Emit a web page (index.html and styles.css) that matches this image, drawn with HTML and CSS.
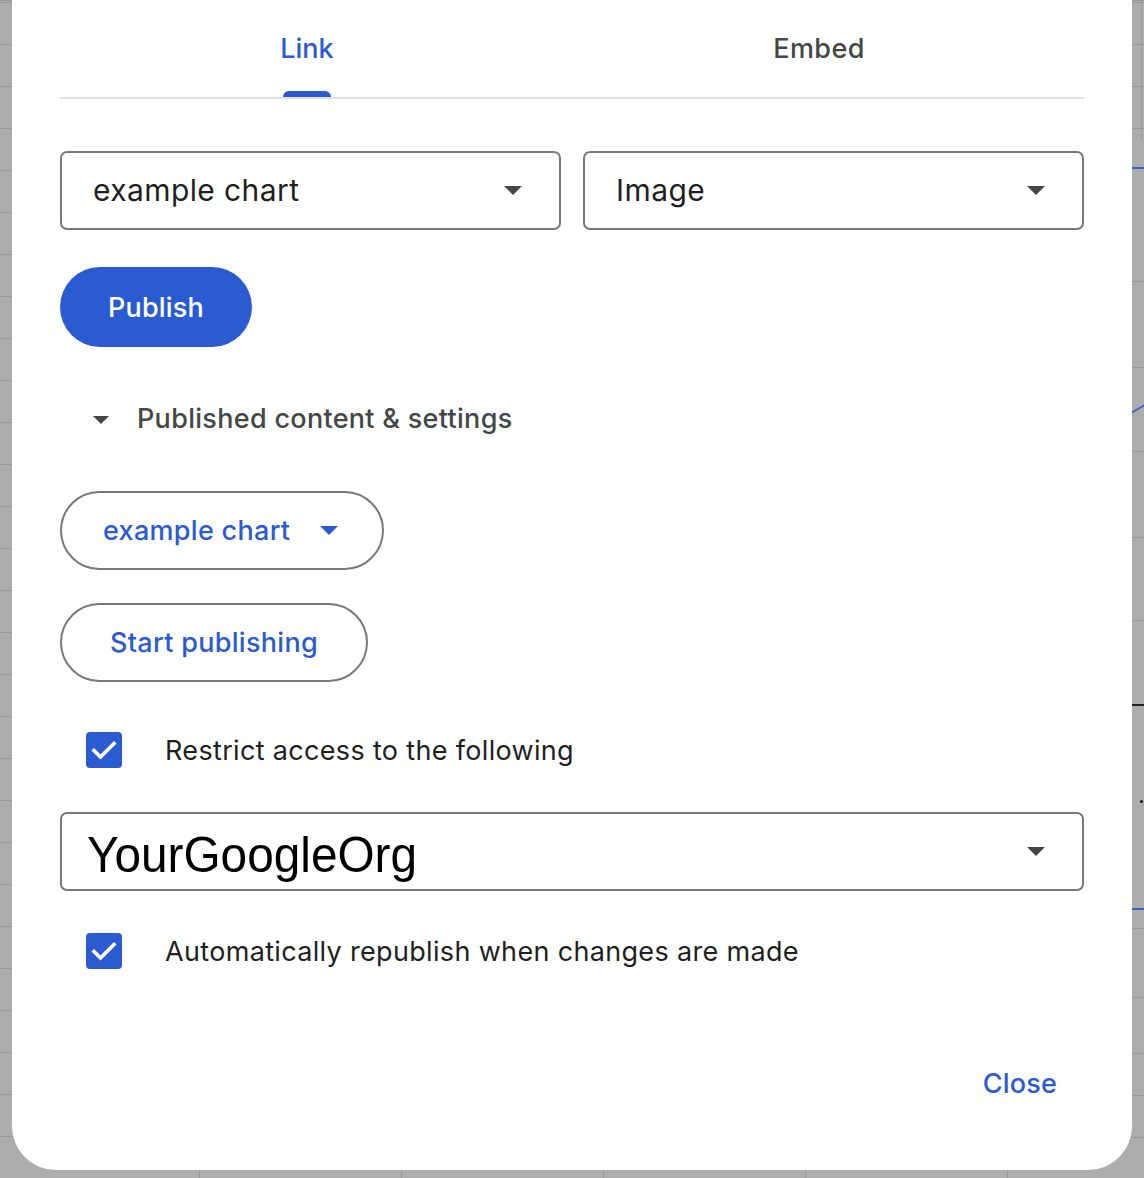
FILE: index.html
```html
<!DOCTYPE html>
<html lang="en">
<head>
<meta charset="utf-8">
<title>Publish to the web</title>
<link rel="stylesheet" href="styles.css">
</head>
<body>
<div class="page">
  <div class="strip strip-left"></div>
  <div class="dialog">
    <div class="tabs">
      <div class="tab tab-active"><span class="tab-label">Link</span><span class="tab-indicator"></span></div>
      <div class="tab"><span class="tab-label">Embed</span></div>
    </div>
    <div class="divider"></div>

    <div class="select-row">
      <div class="select"><span class="select-text">example chart</span><span class="arrow"></span></div>
      <div class="select"><span class="select-text">Image</span><span class="arrow"></span></div>
    </div>

    <button class="btn-primary">Publish</button>

    <div class="section-toggle">
      <span class="caret"></span>
      <span class="section-title">Published content &amp; settings</span>
    </div>

    <button class="btn-outline btn-chart">example chart<span class="arrow arrow-blue"></span></button>
    <button class="btn-outline btn-start">Start publishing</button>

    <div class="check-row check-row-1">
      <span class="checkbox"><svg viewBox="0 0 36 36" width="36" height="36"><polyline points="8,18.5 14.5,25 28,11.5" fill="none" stroke="#fff" stroke-width="3.6" stroke-linecap="square"/></svg></span>
      <span class="check-label">Restrict access to the following</span>
    </div>

    <div class="select select-org"><span class="org-text">YourGoogleOrg</span><span class="arrow"></span></div>

    <div class="check-row check-row-2">
      <span class="checkbox"><svg viewBox="0 0 36 36" width="36" height="36"><polyline points="8,18.5 14.5,25 28,11.5" fill="none" stroke="#fff" stroke-width="3.6" stroke-linecap="square"/></svg></span>
      <span class="check-label">Automatically republish when changes are made</span>
    </div>

    <div class="footer">
      <button class="btn-text">Close</button>
    </div>
  </div>
  <div class="strip strip-right">
    <span class="mark mark-blue" style="top:167px"></span>
    <span class="mark mark-grid" style="top:281px"></span>
    <span class="mark mark-grid" style="top:367px"></span>
    <span class="mark mark-curve"></span>
    <span class="mark mark-grid" style="top:451px"></span>
    <span class="mark mark-grid" style="top:537px"></span>
    <span class="mark mark-grid" style="top:620px"></span>
    <span class="mark mark-black" style="top:704px"></span>
    <span class="mark mark-dot"></span>
    <span class="mark mark-blue" style="top:908px"></span>
    <span class="mark mark-grid" style="top:928px"></span>
    <span class="mark mark-grid" style="top:997px"></span>
    <span class="mark mark-grid" style="top:1053px"></span>
    <span class="mark mark-grid" style="top:1095px"></span>
    <span class="mark mark-grid" style="top:1137px"></span>
  </div>
</div>
</body>
</html>
```

FILE: styles.css
```css
* { box-sizing: border-box; }

html, body {
  margin: 0;
  padding: 0;
}

body {
  width: 1144px;
  height: 1178px;
  overflow: hidden;
  font-family: Inter, Roboto, "Liberation Sans", sans-serif;
  background-color: #adadad;
  background-image:
    repeating-linear-gradient(to bottom, #999 0, #999 1px, transparent 1px, transparent 42px),
    repeating-linear-gradient(to right, #999 0, #999 1px, transparent 1px, transparent 202px);
  background-position: 0 2px, -3px 0;
}

.page {
  display: flex;
  height: 1178px;
}

.strip {
  width: 12px;
  flex: none;
}

.strip-right {
  position: relative;
  background-image: linear-gradient(to bottom, transparent 0, transparent 140px, #adadad 140px);
}

.mark {
  position: absolute;
  left: 0;
  width: 12px;
  height: 1px;
}
.mark-grid { background: #999; }
.mark-blue { height: 2px; background: #3b63c4; }
.mark-black { height: 2px; background: #222; }
.mark-curve {
  top: 408px;
  height: 2px;
  background: #3b63c4;
  transform: skewY(-30deg);
}
.mark-dot {
  top: 800px;
  left: 8px;
  width: 3px;
  height: 3px;
  border-radius: 50%;
  background: #111;
}

.dialog {
  width: 1120px;
  height: 1170px;
  flex: none;
  background: #fff;
  border-radius: 0 0 44px 44px;
  padding: 0 48px;
  display: flex;
  flex-direction: column;
  align-items: flex-start;
}

/* Tabs */
.tabs {
  display: grid;
  grid-template-columns: 512px 512px;
  margin-left: -9px;
  height: 97px;
  align-self: stretch;
}
.tab {
  position: relative;
  display: flex;
  justify-content: center;
  align-items: center;
}
.tab-label {
  font-size: 27px;
  font-weight: 500;
  color: #444746;
  letter-spacing: 0.4px;
}
.tab-active .tab-label { color: #2a5bd0; letter-spacing: 0; }
.tab-indicator {
  position: absolute;
  bottom: 0;
  left: 50%;
  width: 48px;
  margin-left: -24px;
  height: 6px;
  background: #2a5bd0;
  border-radius: 6px 6px 0 0;
}
.divider {
  align-self: stretch;
  height: 2px;
  background: #e0e0e0;
}

/* Selects */
.select-row {
  align-self: stretch;
  display: grid;
  grid-template-columns: 1fr 1fr;
  gap: 22px;
  margin-top: 52px;
}
.select {
  height: 79px;
  border: 2px solid #79797a;
  border-radius: 7px;
  display: flex;
  align-items: center;
  justify-content: space-between;
  padding: 0 37px 0 31px;
}
.select-text {
  font-size: 30px;
  color: #1f1f1f;
  letter-spacing: 0.4px;
  padding-bottom: 2px;
}
.arrow {
  width: 0;
  height: 0;
  border-left: 9px solid transparent;
  border-right: 9px solid transparent;
  border-top: 9px solid #444746;
}
.arrow-blue {
  border-top-color: #2a5bd0;
  margin-left: 30px;
}

/* Buttons */
button {
  font-family: inherit;
  cursor: pointer;
}
.btn-primary {
  margin-top: 37px;
  width: 192px;
  height: 80px;
  border: none;
  border-radius: 40px;
  background: #2a5bd0;
  color: #fff;
  font-size: 27px;
  font-weight: 500;
  letter-spacing: 0.2px;
  padding: 0;
}

.section-toggle {
  margin-top: 55px;
  display: flex;
  align-items: center;
  padding-left: 33px;
  height: 32px;
}
.caret {
  width: 0;
  height: 0;
  border-left: 8px solid transparent;
  border-right: 8px solid transparent;
  border-top: 8px solid #444746;
  margin-right: 28px;
  margin-top: 4px;
}
.section-title {
  font-size: 27px;
  font-weight: 500;
  color: #444746;
  letter-spacing: 0.3px;
  padding-top: 1px;
}

.btn-outline {
  height: 79px;
  border: 2px solid #79797a;
  border-radius: 40px;
  background: #fff;
  color: #2a5bd0;
  font-size: 27px;
  font-weight: 500;
  letter-spacing: 0.3px;
  display: flex;
  align-items: center;
  padding-bottom: 1px;
}
.btn-chart {
  margin-top: 57px;
  width: 324px;
  padding-left: 41px;
}
.btn-start {
  margin-top: 33px;
  width: 308px;
  justify-content: center;
}

/* Checkboxes */
.check-row {
  display: flex;
  align-items: center;
  padding-left: 26px;
  height: 36px;
}
.check-row-1 { margin-top: 50px; }
.check-row-2 { margin-top: 42px; }
.checkbox {
  width: 36px;
  height: 36px;
  border-radius: 4px;
  background: #2a5bd0;
  display: block;
  flex: none;
}
.checkbox svg { display: block; }
.check-label {
  margin-left: 43px;
  font-size: 27px;
  color: #1f1f1f;
  letter-spacing: 0.33px;
}

.select-org {
  align-self: stretch;
  margin-top: 44px;
  padding-left: 25px;
}
.org-text {
  font-family: "Liberation Sans", Arial, sans-serif;
  font-size: 50px;
  color: #000;
  display: inline-block;
  transform: scaleX(0.955);
  transform-origin: left center;
  margin-top: 6px;
}

.footer {
  align-self: stretch;
  display: flex;
  justify-content: flex-end;
  margin-top: 98px;
  padding-right: 27px;
}
.btn-text {
  border: none;
  background: none;
  padding: 0;
  color: #2a5bd0;
  font-size: 27px;
  font-weight: 500;
  letter-spacing: 0.2px;
}
```
